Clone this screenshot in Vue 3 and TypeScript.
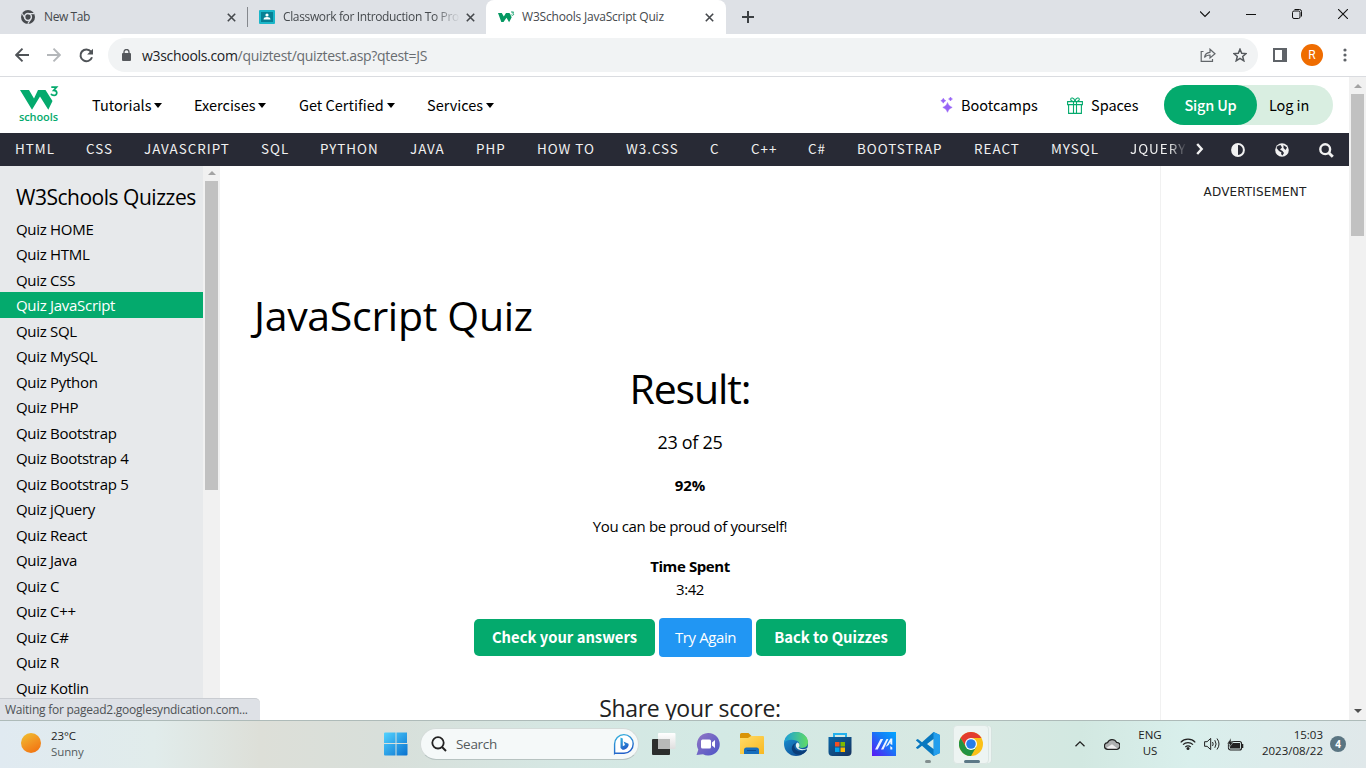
<script setup lang="ts">
const menus: string[] = ['Tutorials', 'Exercises', 'Get Certified', 'Services']
const topics: string[] = ['HTML', 'CSS', 'JAVASCRIPT', 'SQL', 'PYTHON', 'JAVA', 'PHP', 'HOW TO', 'W3.CSS', 'C', 'C++', 'C#', 'BOOTSTRAP', 'REACT', 'MYSQL', 'JQUERY']
const quizzes: string[] = ['HOME', 'HTML', 'CSS', 'JavaScript', 'SQL', 'MySQL', 'Python', 'PHP', 'Bootstrap', 'Bootstrap 4', 'Bootstrap 5', 'jQuery', 'React', 'Java', 'C', 'C++', 'C#', 'R', 'Kotlin']
const active = 'JavaScript'
</script>

<template>
  <div class="screen">
    <header class="tabs">
      <div class="tab tab-one">
        <svg class="fav" width="14" height="14" viewBox="0 0 14 14"><circle cx="7" cy="7" r="7" fill="#46494d"/><circle cx="7" cy="7" r="3.4" fill="none" stroke="#dee1e6" stroke-width="1.5"/><path d="M7 3.600h6.200M4.100 8.600L1.200 3.400M9.900 8.600L6.800 13.800" stroke="#dee1e6" stroke-width="1.100"/></svg>
        <span class="tab-text t-new">New Tab</span>
        <svg class="close" width="9" height="9" viewBox="0 0 9 9"><path d="M.8.8l7.400 7.400M8.200.8L.8 8.200" stroke="#45484c" stroke-width="1.600"/></svg>
      </div>
      <div class="tab tab-two">
        <svg class="fav" width="16" height="14" viewBox="0 0 16 14"><rect width="16" height="14" rx="1" fill="#1bb6c9"/><rect x="2" y="2" width="12" height="10" fill="#078094"/><circle cx="8" cy="5" r="1.600" fill="#fff"/><path d="M4.500 9.500c0-1.700 1.500-2.500 3.500-2.500s3.500.8 3.500 2.500z" fill="#fff"/></svg>
        <span class="tab-text t-class">Classwork for Introduction To Pro</span>
        <svg class="close" width="9" height="9" viewBox="0 0 9 9"><path d="M.8.8l7.400 7.400M8.200.8L.8 8.200" stroke="#45484c" stroke-width="1.600"/></svg>
      </div>
      <div class="tab tab-three">
        <svg class="fav" width="17" height="12" viewBox="0 0 17 12"><path d="M0 2h3.800l2 3.500L8 2h3.500l2.200 4.300-2.600 5L8.500 6.800 5.500 11 3.300 11z" fill="#059862"/><path d="M13 1h2.600l-1 1.200c1.500.2 1.300 2.100-.1 2.100-.8 0-1.200-.4-1.300-.7" fill="none" stroke="#059862" stroke-width=".9"/></svg>
        <span class="tab-text t-w3">W3Schools JavaScript Quiz</span>
        <svg class="close" width="9" height="9" viewBox="0 0 9 9"><path d="M.8.8l7.400 7.400M8.200.8L.8 8.200" stroke="#45484c" stroke-width="1.600"/></svg>
      </div>
      <svg class="plus" width="12" height="12" viewBox="0 0 12 12"><path d="M6 0v12M0 6h12" stroke="#3c4043" stroke-width="2"/></svg>
      <div class="window-buttons">
        <svg width="10" height="10" viewBox="0 0 10 10"><path d="M0 2.500l5 5 5-5" fill="none" stroke="#111" stroke-width="1.200"/></svg>
        <svg width="10" height="10" viewBox="0 0 10 10"><path d="M0 5.500h10" stroke="#111"/></svg>
        <svg width="10" height="10" viewBox="0 0 10 10"><rect x=".5" y="2" width="7.500" height="7.500" rx="1.500" fill="none" stroke="#111"/><path d="M2.500.5H7.500Q9.500.5 9.500 2.500V7.500" fill="none" stroke="#111"/></svg>
        <svg width="10" height="10" viewBox="0 0 10 10"><path d="M0 0l10 10M10 0L0 10" stroke="#111" stroke-width="1.100"/></svg>
      </div>
    </header>

    <div class="toolbar">
      <svg class="nav-arrow" width="14" height="14" viewBox="0 0 14 14"><path d="M14 7H1.500M7.500 .7L1.200 7l6.300 6.300" fill="none" stroke="#4f5357" stroke-width="1.900"/></svg>
      <svg class="nav-arrow forward" width="14" height="14" viewBox="0 0 14 14"><path d="M0 7h12.500M6.500 .7L12.800 7l-6.300 6.300" fill="none" stroke="#b4b7ba" stroke-width="1.900"/></svg>
      <svg class="reload" width="15" height="15" viewBox="0 0 15 15"><path d="M12 3.600A5.900 5.900 0 1 0 13 9.200" fill="none" stroke="#4f5357" stroke-width="2"/><path d="M14 .7v5.900H8.100z" fill="#4f5357"/></svg>
      <div class="address">
        <svg width="9" height="12" viewBox="0 0 9 12"><rect y="4" width="9" height="8" rx="1" fill="#55585c"/><path d="M2 5V3a2.500 2.500 0 0 1 5 0v2" fill="none" stroke="#55585c" stroke-width="1.300"/></svg>
        <p class="url"><span>w3schools.com</span>/quiztest/quiztest.asp?qtest=JS</p>
        <svg class="share" width="16" height="14" viewBox="0 0 16 14"><path d="M3.500 3.500H1.200V13.300H12.500V11M4.500 9.500C5 6 7 4.500 10 4.300V1.200L15 5.800 10 10V7C7.500 7 5.800 7.700 4.500 9.500z" fill="none" stroke="#62666a" stroke-width="1.200"/></svg>
        <svg class="star" width="14" height="14" viewBox="0 0 14 14"><path d="M7 1.200l1.700 4.100 4.400.3-3.400 2.900 1.100 4.300L7 10.400l-3.800 2.400 1.100-4.300L.9 5.600l4.400-.3z" fill="none" stroke="#55595d" stroke-width="1.500"/></svg>
      </div>
      <svg class="panel" width="14" height="14" viewBox="0 0 14 14"><path d="M1 1h12v12H1z" fill="none" stroke="#5f6368" stroke-width="2"/><path d="M9 1h4v12H9z" fill="#5f6368"/></svg>
      <div class="avatar">R</div>
      <svg class="dots" width="4" height="14" viewBox="0 0 4 14"><g fill="#5f6368"><circle cx="2" cy="2" r="1.600"/><circle cx="2" cy="7" r="1.600"/><circle cx="2" cy="12" r="1.600"/></g></svg>
    </div>

    <div class="viewport">
      <div class="page">
        <nav class="site-nav">
          <div class="logo">
            <svg width="40" height="26" viewBox="0 0 40 26"><path d="M1 5h9l5 8.500L19 5h7.500l7 11-4.200 8.700L21 11.500 13 24.700z" fill="#04aa6d"/><path d="M32.300 2.100h5.300l-2.900 3.200c4.100 0 4 5.100.4 5.100-1.600 0-2.700-.7-3.100-1.700" fill="none" stroke="#04aa6d" stroke-width="1.700"/></svg>
            <span>schools</span>
          </div>
          <div class="menus">
            <a v-for="m in menus" :key="m">{{ m }}<i class="caret"></i></a>
          </div>
          <div class="extras">
            <svg class="sparkles" width="14" height="16" viewBox="0 0 14 16"><path d="M7.500 5.500q.9 3.600 4.700 4.900-3.800 1.200-4.700 4.900-.9-3.700-4.700-4.900 3.800-1.300 4.700-4.900zM3.300 1.200q.6 1.900 2.500 2.500-1.900.6-2.500 2.500Q2.700 4.300.8 3.700 2.700 3.100 3.300 1.200zM10.500 0q.5 1.500 2 2-1.500.5-2 2-.5-1.500-2-2 1.500-.5 2-2z" fill="#9763f6" stroke="#9763f6" stroke-width=".5"/></svg>
            <a class="bootcamps">Bootcamps</a>
            <svg class="gift" width="16" height="17" viewBox="0 0 16 17"><path d="M.6 4.600h14.800v3H.6zM1.600 7.600v8.800h12.800V7.600M6.500 4.600v11.800M9.500 4.600v11.800M8 4.600C6 4.600 3.700 4 3.700 2.300 3.700.2 7.300.2 8 4.600 8.700.2 12.300.2 12.300 2.300 12.300 4 10 4.600 8 4.600z" fill="none" stroke="#04aa6d" stroke-width="1.100"/></svg>
            <a class="spaces">Spaces</a>
          </div>
          <div class="account"><b>Sign Up</b><span>Log in</span></div>
        </nav>

        <div class="topic-bar">
          <div class="topics"><a v-for="t in topics" :key="t" :class="{ fading: t === 'JQUERY' }">{{ t }}</a></div>
          <div class="tools">
            <svg width="8" height="12" viewBox="0 0 8 12"><path d="M1.200 1l4.500 5-4.500 5" fill="none" stroke="#f1f1f1" stroke-width="2.400"/></svg>
            <svg width="14" height="14" viewBox="0 0 14 14"><circle cx="7" cy="7" r="5.900" fill="none" stroke="#f1f1f1" stroke-width="2"/><path d="M7 1v12A6 6 0 0 1 7 1z" fill="#f1f1f1"/></svg>
            <svg width="14" height="14" viewBox="0 0 14 14"><circle cx="7" cy="7" r="6.800" fill="#f1f1f1"/><path d="M2.500 3L1.500 5 4 8l2.500 1.500L6 11l1.500 1.500L9 10 7.500 8 5 6.500 7 4.500 5.500 2zM8.500 2l3.500 2.500L10.500 7 8.500 5z" fill="#282a35"/></svg>
            <svg width="15" height="15" viewBox="0 0 15 15"><circle cx="6.200" cy="6.200" r="4.900" fill="none" stroke="#f1f1f1" stroke-width="2.400"/><path d="M9.700 9.700l4.100 4.100" stroke="#f1f1f1" stroke-width="2.900"/></svg>
          </div>
        </div>

        <div class="columns">
          <aside class="sidebar">
            <h2>W3Schools Quizzes</h2>
            <a v-for="q in quizzes" :key="q" :class="{ active: q === active }">Quiz {{ q }}</a>
          </aside>
          <div class="side-scroll"><i class="arrow-up"></i><i class="thumb"></i></div>
          <main class="content">
            <h1>JavaScript Quiz</h1>
            <div class="result">
              <h1 class="result-title">Result:</h1>
              <p class="score">23 of 25</p>
              <p class="percent">92%</p>
              <p class="praise">You can be proud of yourself!</p>
              <p class="time-label">Time Spent</p>
              <p class="time">3:42</p>
              <div class="buttons">
                <button class="check">Check your answers</button>
                <button class="again">Try Again</button>
                <button class="back">Back to Quizzes</button>
              </div>
              <h3>Share your score:</h3>
            </div>
          </main>
          <section class="ad">ADVERTISEMENT</section>
        </div>
      </div>
      <div class="page-scroll"><i class="arrow-up"></i><i class="thumb"></i><i class="arrow-down"></i></div>
      <div class="status"><span>Waiting for pagead2.googlesyndication.com...</span></div>
    </div>

    <footer class="taskbar">
      <div class="weather"><i class="sun"></i><p><span class="temp">23°C</span><span class="sky">Sunny</span></p></div>
      <div class="apps">
        <svg class="start" width="24" height="24" viewBox="0 0 24 24"><defs><linearGradient id="win" x1="0" y1="0" x2="1" y2="1"><stop stop-color="#53d3ff"/><stop offset="1" stop-color="#0871cf"/></linearGradient></defs><path d="M1 .5h10.500V11H0V1.500a1 1 0 0 1 1-1zM12.500.5H23v10.500H12.500zM0 12h11.500v11.500H1a1 1 0 0 1-1-1zM12.500 12H23.500v10.500a1 1 0 0 1-1 1h-10z" fill="url(#win)"/></svg>
        <div class="search">
          <svg width="16" height="16" viewBox="0 0 16 16"><circle cx="7" cy="6.800" r="5.700" fill="none" stroke="#222" stroke-width="1.800"/><path d="M11 11l4 4" stroke="#222" stroke-width="2"/></svg>
          <span>Search</span>
          <svg class="bing" width="22" height="22" viewBox="0 0 22 22"><defs><linearGradient id="bing" x1="0" y1="0" x2=".4" y2="1"><stop stop-color="#35b6df"/><stop offset="1" stop-color="#2360c9"/></linearGradient></defs><path d="M1.600 20.500V11A9.300 9.300 0 1 1 11 20.200H2z" fill="#fff" stroke="url(#bing)" stroke-width="1.400"/><path d="M7.500 4.500l2.300.9v7.800L12 12l-1.500-3.500 5 2.300c1 3.500-3.500 6.500-6 6l-2-1.700z" fill="url(#bing)"/></svg>
        </div>
        <svg width="26" height="26" viewBox="0 0 26 26"><defs><linearGradient id="tv" x1="0" y1="0" x2="0" y2="1"><stop stop-color="#ffffff"/><stop offset="1" stop-color="#dedede"/></linearGradient></defs><rect x="1" y="8" width="18" height="16" rx="1" fill="#2c2e2d"/><rect x="7" y="2" width="17.500" height="16" rx="1" fill="url(#tv)"/><path d="M7 8h12v10H7z" fill="#b7b9b8"/></svg>
        <svg width="26" height="26" viewBox="0 0 26 26"><defs><linearGradient id="chat" x1="0" y1="0" x2="1" y2="1"><stop stop-color="#9277c4"/><stop offset="1" stop-color="#4d54c7"/></linearGradient></defs><path d="M13 2A11.300 11.300 0 1 1 8 23.200L1.500 24l1.800-5.200A11.300 11.300 0 0 1 13 2z" fill="url(#chat)"/><rect x="6" y="8.500" width="10" height="9" rx="1.500" fill="#fff"/><path d="M17 11.500l3-2.500v8l-3-2.500z" fill="#fff"/></svg>
        <svg width="26" height="26" viewBox="0 0 26 26"><defs><linearGradient id="folder" x1="0" y1="0" x2="1" y2="1"><stop stop-color="#ffdc69"/><stop offset="1" stop-color="#f8b821"/></linearGradient></defs><path d="M1 3.500a1.500 1.500 0 0 1 1.500-1.500h7l3 3V10H1z" fill="#d99407"/><path d="M1 7h8l3-2h12q1 0 1 1v17H1z" fill="url(#folder)"/><path d="M5 23v-4q0-2.500 2.500-2.500h10q2.500 0 2.500 2.500v4z" fill="#176fbd"/><path d="M8 19.500h9" stroke="#0f4c91"/></svg>
        <svg width="26" height="26" viewBox="0 0 26 26"><defs><linearGradient id="edge-a" x1="0" x2="1"><stop stop-color="#1c9eda"/><stop offset="1" stop-color="#61dc63"/></linearGradient><linearGradient id="edge-b" x1="0" y1="0" x2=".7" y2="1"><stop stop-color="#1a9bdc"/><stop offset="1" stop-color="#104c93"/></linearGradient></defs><circle cx="13" cy="13" r="12" fill="url(#edge-b)"/><path d="M1 12C2 5 7 1 13 1c7 0 12 5 12 10 0 6-6 7-9.500 5 1.800-2.600.8-5.500-2.500-6.500C8 8 3 9 1 12z" fill="url(#edge-a)"/><path d="M14 11.500c-3.500 1.500-3.500 6 .2 8 3 1.500 6.300 1 9.300-1l.5.700C20 25.500 12 25 9.500 20 7.500 16 10 12.500 14 11.500z" fill="#0b3d78"/><path d="M15.500 16.500c1.700-2 1-4.400-1.300-5-2.200 1.800-1.700 5.400 1.500 7 2.900 1.300 6 .8 8.800-.7l1-1c-4 2-8 1.800-10-.3z" fill="#e4f2ee"/></svg>
        <svg width="26" height="26" viewBox="0 0 26 26"><defs><linearGradient id="store" x1="0" y1="0" x2="1" y2="1"><stop stop-color="#0967a9"/><stop offset="1" stop-color="#17325d"/></linearGradient></defs><path d="M7 7V3h12v4" fill="none" stroke="#24b1ed" stroke-width="2"/><path d="M1.500 6h23v15q0 4-4 4h-15q-4 0-4-4z" fill="url(#store)"/><path d="M8 11h4.500v4.500H8z" fill="#f25022"/><path d="M13.500 11H18v4.500h-4.500z" fill="#7fba00"/><path d="M8 16.500h4.500V21H8z" fill="#00a4ef"/><path d="M13.500 16.500H18V21h-4.500z" fill="#ffb900"/></svg>
        <svg width="26" height="26" viewBox="0 0 26 26"><defs><linearGradient id="asus" x1="0" y1="1" x2="1" y2="0"><stop stop-color="#5a17f5"/><stop offset=".6" stop-color="#147df7"/><stop offset="1" stop-color="#03a6ff"/></linearGradient></defs><rect x="1" y="1" width="24" height="24" fill="url(#asus)"/><path d="M4 18.500L9.500 8h2.700L6.700 18.500zM10 18.500L15.500 8h1.900l-5 10.500zM14.500 16L19.500 7.500h1.800V14l-2-1V11l-1.700 3zM19.300 15l2 1.500v2h-2z" fill="#eef5ff"/></svg>
        <div class="code"><svg width="26" height="26" viewBox="0 0 26 26"><path d="M18.500 1L25 4v18l-6.500 3L7 14.800 2.800 18 1 17V9l1.800-1L7 11.200z" fill="#0877bf"/><path d="M18.500 1L25 4v18l-6.500 3z" fill="#239eed"/><path d="M18.500 8v10L12 13zM1 9.500l4 3.500-4 3.500z" fill="#d8ece8"/></svg><i></i></div>
        <div class="chrome-tile"><svg width="24" height="24" viewBox="0 0 24 24"><circle cx="12" cy="12" r="12" fill="#fbc116"/><path d="M1.600 6A12 12 0 0 1 22.400 6H12L7 15z" fill="#e33b2e"/><path d="M1.600 6A12 12 0 0 0 12 24l5.200-9H7z" fill="#229342"/><circle cx="12" cy="12" r="6" fill="#fff"/><circle cx="12" cy="12" r="4.800" fill="#277de9"/></svg><i></i></div>
      </div>
      <div class="tray">
        <svg class="chevron" width="10" height="6" viewBox="0 0 10 6"><path d="M.5 5.300L5 .9l4.500 4.400" fill="none" stroke="#222" stroke-width="1.300"/></svg>
        <svg class="cloud" width="16" height="12" viewBox="0 0 16 12"><path d="M4 11.300a3.300 3.300 0 0 1-.5-6.600A5 5 0 0 1 12.500 4.300a3.500 3.500 0 0 1 0 7z" fill="#aeb1b1" stroke="#222" stroke-width="1.200"/><path d="M2.500 9.800L8 6.300l5.500 4.200H4z" fill="#eee"/></svg>
        <p class="language"><span>ENG</span><span>US</span></p>
        <svg class="wifi" width="16" height="12" viewBox="0 0 16 12"><g fill="none" stroke="#222" stroke-width="1.200"><path d="M.7 4.300a10.200 10.200 0 0 1 14.600 0M3 6.700a7 7 0 0 1 10 0M5.300 9a4 4 0 0 1 5.400 0"/></g><circle cx="8" cy="10.500" r="1.500" fill="#222"/></svg>
        <svg class="sound" width="16" height="14" viewBox="0 0 16 14"><path d="M.6 4.700h2.500L6.700 1.400v11.200L3.100 9.300H.6zM8.500 5q1.400 2 0 4M10.800 3.200q2.600 3.800 0 7.600M13 1.500q4 5.500 0 11" fill="none" stroke="#222"/></svg>
        <svg class="battery" width="17" height="13" viewBox="0 0 17 13"><rect x="1.500" y="3.500" width="13" height="8.500" rx="2" fill="none" stroke="#222" stroke-width="1.200"/><rect x="3" y="5" width="10" height="5.500" fill="#222"/><path d="M15.500 6v4" stroke="#222" stroke-width="1.600"/><path d="M4 0L0 6h2.500L2 9.500 6.500 4H4z" fill="#222" stroke="#d9ecea" stroke-width=".5"/></svg>
        <p class="clock"><span>15:03</span><span>2023/08/22</span></p>
        <b class="badge">4</b>
      </div>
    </footer>
  </div>
</template>

<style>
body { margin: 0; overflow: hidden; }
</style>

<style scoped>
* { box-sizing: border-box; }
p, h1, h2, h3 { margin: 0; font-weight: 400; }
svg { display: block; flex: none; }
.screen { width: 1366px; height: 768px; display: flex; flex-direction: column; overflow: hidden; background: #fff; color: #000; font-family: "Open Sans", "Noto Sans", sans-serif; white-space: nowrap; }

.tabs { height: 34px; flex: none; display: flex; align-items: center; background: #dee1e6; font-size: 12px; color: #45494d; }
.tab { display: flex; align-items: center; height: 34px; }
.tab-one { width: 248px; padding: 0 11px 0 21px; border-right: 1px solid #85888d; height: 20px; }
.tab-two { width: 238px; padding: 0 11px; }
.tab-three { width: 240px; padding: 0 12px; background: #fff; border-radius: 8px 8px 0 0; }
.close { margin-left: auto; }
.tab-text { font-size: 12px; line-height: 18px; letter-spacing: -.2px; }
.t-new { margin-left: 9px; letter-spacing: -.4px; }
.t-class { margin-left: 8px; width: 177px; letter-spacing: -.36px; -webkit-mask-image: linear-gradient(90deg, #000 85%, transparent); mask-image: linear-gradient(90deg, #000 85%, transparent); }
.t-w3 { margin-left: 7px; }
.plus { margin-left: 16px; }
.window-buttons { margin-left: auto; width: 148px; display: flex; justify-content: space-between; margin-right: 18px; padding-bottom: 6px; }

.toolbar { height: 43px; flex: none; display: flex; align-items: center; padding-left: 15px; border-bottom: 1px solid #dadce0; }
.forward { margin-left: 18px; }
.reload { margin-left: 18px; }
.address { width: 1150px; height: 34px; margin-left: 14px; border-radius: 17px; background: #f1f3f4; display: flex; align-items: center; padding-left: 14px; padding-right: 11px; }
.url { margin-left: 11px; padding-top: 1px; font-size: 14px; line-height: 20px; color: #686c70; letter-spacing: -.31px; }
.url span { color: #202124; }
.share { margin-left: auto; }
.star { margin-left: 17px; }
.panel { margin-left: 15px; }
.avatar { width: 22px; height: 22px; margin-left: 14px; border-radius: 50%; background: #ef6c00; color: #fff; font: 12px/22px Roboto, sans-serif; text-align: center; }
.dots { margin-left: 20px; }

.viewport { height: 643px; flex: none; display: flex; position: relative; overflow: hidden; }
.page { width: 1349px; display: flex; flex-direction: column; }
.site-nav { height: 56px; flex: none; display: flex; align-items: center; font-family: "Noto Sans CJK SC", sans-serif; font-size: 14.500px; line-height: 20px; }
.logo { width: 92px; padding: 0 0 4px 19px; color: #04aa6d; font: 600 11px/10px "Open Sans", sans-serif; }
.logo span { display: block; padding-top: 1px; letter-spacing: -.1px; }
.menus { display: grid; grid-template-columns: 102px 105px 128px 90px; }
.caret { display: inline-block; margin-left: 3px; vertical-align: 3px; border: 4.500px solid transparent; border-top: 5px solid #000; border-bottom: 0; }
.extras { margin-left: auto; display: flex; align-items: center; }
.bootcamps { width: 76px; margin-left: 7px; }
.gift { margin-left: 30px; }
.spaces { margin-left: 8px; width: 47px; }
.account { width: 169px; height: 40px; margin: 0 16px 0 26px; background: #d9eee1; border-radius: 20px; display: flex; line-height: 40px; letter-spacing: -.1px; }
.account b { width: 93px; border-radius: 20px; background: #04aa6d; color: #fff; text-align: center; font-weight: 500; letter-spacing: -.2px; }
.account span { margin-left: 12px; }

.topic-bar { height: 33px; flex: none; display: flex; background: #282a35; color: #f1f1f1; font: 13.400px/31px "Noto Sans CJK SC", sans-serif; letter-spacing: 1px; }
.topics { width: 1187px; padding-left: 15px; display: grid; grid-template-columns: 71px 58px 117px 59px 90px 66px 61px 89px 84px 41px 57px 49px 117px 77px 79px 57px; }
.fading { -webkit-mask-image: linear-gradient(90deg, #000 68%, transparent); mask-image: linear-gradient(90deg, #000 68%, transparent); }
.tools { flex: 1; display: flex; align-items: center; padding: 1px 15px 0 9px; justify-content: space-between; }
.tools svg:first-child { margin-right: -3px; margin-top: -2px; }

.columns { flex: 1; min-height: 0; display: flex; }
.sidebar { width: 203px; background: #e7e9eb; overflow: hidden; }
.sidebar h2 { height: 49.500px; padding-left: 16px; font-size: 21px; line-height: 62px; letter-spacing: -.48px; }
.sidebar a { display: block; height: 25.500px; padding-left: 16px; font-size: 15px; line-height: 27px; letter-spacing: -.3px; }
.sidebar a.active { background: #04aa6d; color: #fff; }
.side-scroll { width: 17px; background: #f1f1f1; display: flex; flex-direction: column; align-items: center; }
.side-scroll .thumb { height: 309px; }
.thumb { width: 13px; background: #c1c1c1; }
.arrow-up { margin: 5px 0 6px; border: 4px solid transparent; border-top: 0; border-bottom: 4px solid #a3a3a3; }
.arrow-down { margin: auto 0 7px; border: 4px solid transparent; border-bottom: 0; border-top: 4px solid #505050; }
.content { width: 940px; padding-top: 120px; }
h1 { font-size: 41px; line-height: 60px; font-weight: 400; letter-spacing: -.3px; }
.content > h1 { height: 59px; line-height: 59px; padding-left: 34px; }
.result { text-align: center; font-size: 15px; line-height: 23px; }
.result-title { margin-top: 14px; letter-spacing: -1.100px; line-height: 59px; }
.score { margin-top: 11px; font-size: 18px; line-height: 26px; letter-spacing: -.3px; }
.percent { margin-top: 19px; font-weight: 700; }
.praise { margin-top: 18px; letter-spacing: -.38px; }
.time-label { margin-top: 17px; font-weight: 700; letter-spacing: -.4px; }
.time { letter-spacing: -.4px; }
.buttons { display: flex; justify-content: center; align-items: center; gap: 4px; margin-top: 17px; }
button { border: 0; padding: 0 0 2px; border-radius: 5px; color: #fff; background: #04aa6d; height: 37px; font: 700 14.800px "Noto Sans CJK SC", sans-serif; }
.check { width: 181px; }
.back { width: 150px; }
button.again { width: 93px; height: 39px; padding-bottom: 2px; background: #2196f3; font: 400 15px "Open Sans", sans-serif; letter-spacing: -.4px; border-radius: 4px; }
h3 { margin-top: 34px; font-size: 23px; line-height: 34px; letter-spacing: -.3px; color: #222; }
.ad { width: 189px; border-left: 1px solid #f1f1f1; padding-top: 17px; text-align: center; font: 12px/18px "DejaVu Sans", sans-serif; letter-spacing: .15px; color: #222; }
.page-scroll { width: 17px; background: #f1f1f1; display: flex; flex-direction: column; align-items: center; }
.page-scroll .arrow-up { margin: 7px 0 6px; }
.page-scroll .thumb { height: 142px; }
.status { position: absolute; left: 0; bottom: 0; width: 260px; height: 22px; padding-left: 5px; border-radius: 0 5px 0 0; border-top: 1px solid #c9ccd1; background: #dee1e6; color: #4d5155; font-size: 12px; line-height: 22px; letter-spacing: -.24px; }

.taskbar { height: 48px; flex: none; border-top: 1px solid #aebbb9; display: flex; align-items: center; position: relative; color: #222; font: 12px/16px "Open Sans", sans-serif; background: linear-gradient(90deg, #e0eaf1 0, #e1eceb 155px, #dddfd8 260px, #d8dfda 380px, #d5e7e3 560px, #d3e9e4 720px, #d8e8e2 970px, #d2e8e1 1080px, #d9efec 1190px, #e0e8ea 1366px); }
.taskbar p { padding-bottom: 2px; }
.taskbar p span { display: block; }
.weather { width: 384px; display: flex; align-items: center; padding-left: 21px; }
.sun { width: 20px; height: 20px; margin-right: 10px; margin-top: -4px; border-radius: 50%; background: linear-gradient(150deg, #efc331, #f29422 50%, #f26b0c); }
.weather p { font-size: 11.500px; letter-spacing: -.1px; }
.sky { color: #555c5e; }
.apps { display: flex; align-items: center; gap: 18px; margin-top: -1px; }
.start { margin-right: -6px; }
.search { width: 219px; height: 32px; margin-right: -6px; display: flex; align-items: center; border: 1px solid #d4dbd9; border-bottom-color: #b7c3c1; border-radius: 16px; background: #f5f9f9; padding: 0 3px 0 10px; color: #565b5c; font-size: 13.500px; letter-spacing: -.3px; }
.search span { margin-left: 9px; }
.bing { margin-left: auto; }
.code, .chrome-tile { position: relative; }
.code i { position: absolute; left: 10px; top: 29px; width: 6px; height: 3px; border-radius: 2px; background: #828e8e; }
.chrome-tile { width: 36px; height: 39px; margin-left: -6px; border: 1px solid #dbe6e3; border-radius: 4px; background: #edf4f2; box-shadow: 3px 0 0 -1px #edf4f2, 4px 0 0 -1px #d6e2df; display: flex; align-items: center; justify-content: center; }
.chrome-tile i { position: absolute; left: 10px; bottom: 0; width: 16px; height: 3px; border-radius: 2px; background: #5b7886; }
.tray { flex: 1; display: flex; align-items: center; justify-content: flex-end; padding: 0 20px 1px 0; font-size: 11.500px; }
.cloud { margin-left: 19px; }
.language { width: 26px; margin-left: 17px; text-align: center; }
.wifi { margin-left: 17px; }
.sound { margin-left: 8px; }
.battery { margin-left: 7px; }
.clock { width: 64px; margin-left: 15px; text-align: right; }
.badge { width: 16px; height: 16px; margin-left: 7px; border-radius: 50%; background: #5a7582; color: #fff; font-size: 10px; line-height: 16px; text-align: center; }
</style>
